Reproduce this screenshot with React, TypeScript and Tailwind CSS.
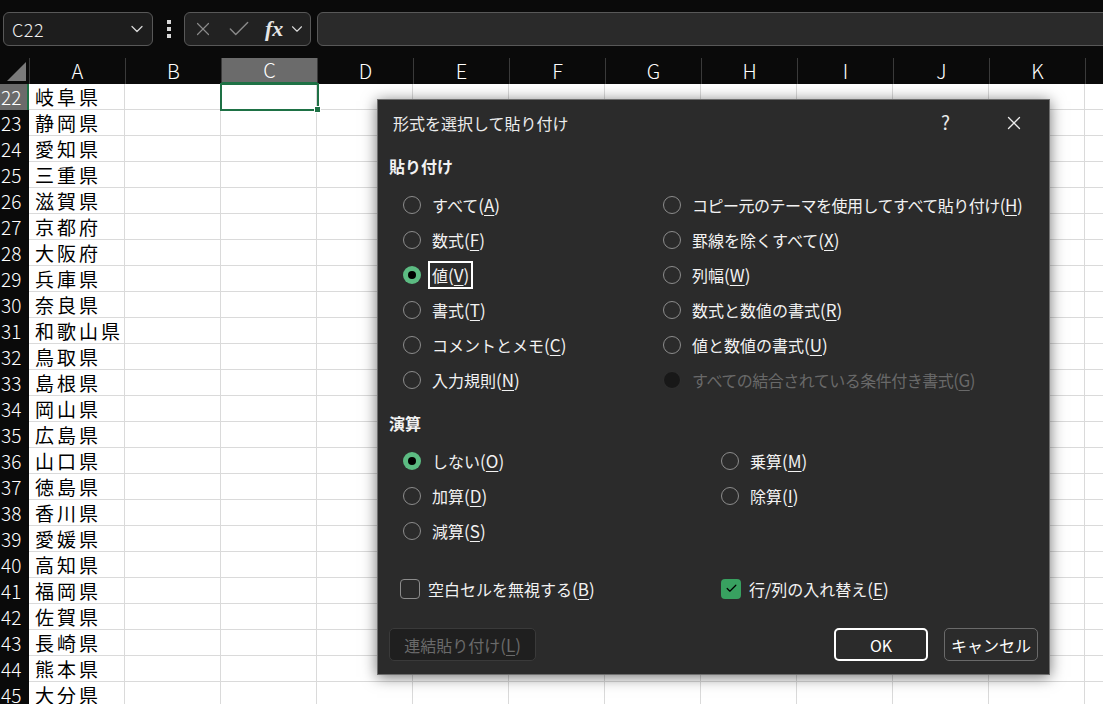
import { Check, ChevronDown, X } from 'lucide-react';

const prefectures = [
  '岐阜県', '静岡県', '愛知県', '三重県', '滋賀県', '京都府', '大阪府', '兵庫県',
  '奈良県', '和歌山県', '鳥取県', '島根県', '岡山県', '広島県', '山口県', '徳島県',
  '香川県', '愛媛県', '高知県', '福岡県', '佐賀県', '長崎県', '熊本県', '大分県',
];

const columns = ['A', 'B', 'C', 'D', 'E', 'F', 'G', 'H', 'I', 'J', 'K', ''];

type Item = { label: string; k: string; selected?: boolean; disabled?: boolean; focused?: boolean; tight?: boolean };

const pasteLeft: Item[] = [
  { label: 'すべて', k: 'A' },
  { label: '数式', k: 'F' },
  { label: '値', k: 'V', selected: true, focused: true },
  { label: '書式', k: 'T' },
  { label: 'コメントとメモ', k: 'C' },
  { label: '入力規則', k: 'N' },
];

const pasteRight: Item[] = [
  { label: 'コピー元のテーマを使用してすべて貼り付け', k: 'H', tight: true },
  { label: '罫線を除くすべて', k: 'X' },
  { label: '列幅', k: 'W' },
  { label: '数式と数値の書式', k: 'R' },
  { label: '値と数値の書式', k: 'U' },
  { label: 'すべての結合されている条件付き書式', k: 'G', disabled: true, tight: true },
];

const opLeft: Item[] = [
  { label: 'しない', k: 'O', selected: true },
  { label: '加算', k: 'D' },
  { label: '減算', k: 'S' },
];

const opRight: Item[] = [
  { label: '乗算', k: 'M' },
  { label: '除算', k: 'I' },
];

function Mnemonic({ label, k }: { label: string; k: string }) {
  return (
    <>
      {label}
      <span className="text-[17px]">
        (<span className="underline decoration-1 underline-offset-[3px]">{k}</span>)
      </span>
    </>
  );
}

function Radio({ item }: { item: Item }) {
  let circle = <div className="w-[18px] h-[18px] shrink-0 rounded-full border-[1.5px] border-[#8c8c8c]" />;
  if (item.selected) {
    circle = (
      <div className="w-[18px] h-[18px] shrink-0 rounded-full bg-[#5cbb82] flex items-center justify-center">
        <div className="w-[8px] h-[8px] rounded-full bg-black" />
      </div>
    );
  } else if (item.disabled) {
    circle = <div className="w-[18px] h-[18px] shrink-0 rounded-full border-[1.5px] border-[#2f2f2f] bg-[#181818]" />;
  }

  return (
    <div className="h-[35px] flex items-center gap-[11px]">
      {circle}
      <span
        className={`whitespace-nowrap text-[16px] ${item.tight ? 'tracking-[-0.5px]' : ''} ${
          item.disabled ? 'text-[#696969]' : 'text-[#f2f2f2]'
        } ${item.focused ? 'leading-[20px] outline-2 outline-offset-2 outline-white' : ''}`}
      >
        <Mnemonic label={item.label} k={item.k} />
      </span>
    </div>
  );
}

function Toolbar() {
  return (
    <div className="h-[58px] flex items-center bg-[#0a0a0a] overflow-hidden">
      <div className="ml-[3px] w-[150px] h-[34px] shrink-0 rounded-[6px] border border-[#585858] bg-[#1d1d1d] flex items-center justify-between pl-[8px] pr-[5px]">
        <span className="text-[18px] font-light tracking-[0.5px] text-[#f0f0f0]">C22</span>
        <ChevronDown className="w-[20px] h-[20px] text-[#d8d8d8]" strokeWidth={1.5} />
      </div>
      <div className="w-[31px] shrink-0 flex flex-col items-center gap-[3px]">
        <div className="w-[4px] h-[4px] bg-[#d8d8d8]" />
        <div className="w-[4px] h-[4px] bg-[#d8d8d8]" />
        <div className="w-[4px] h-[4px] bg-[#d8d8d8]" />
      </div>
      <div className="w-[127px] h-[34px] shrink-0 rounded-[6px] border border-[#585858] bg-[#222222] flex items-center pl-[7px]">
        <X className="w-[22px] h-[22px] text-[#8a8a8a]" strokeWidth={1.3} />
        <Check className="w-[26px] h-[26px] ml-[12px] text-[#8a8a8a]" strokeWidth={1.3} />
        <span className="ml-[13px] text-[22px] italic font-semibold text-[#e6e6e6] font-['Liberation_Serif',serif] leading-none">
          fx
        </span>
        <ChevronDown className="w-[18px] h-[18px] ml-[5px] text-[#d8d8d8]" strokeWidth={1.5} />
      </div>
      <div className="ml-[6px] w-[820px] h-[34px] shrink-0 rounded-[6px] border border-[#585858] bg-[#2a2a2a]" />
    </div>
  );
}

function Sheet() {
  return (
    <div className="relative">
      <div className="h-[26px] flex bg-[#0a0a0a]">
        <div className="w-[29px] shrink-0 flex items-end justify-end pr-[3px] pb-[3px]">
          <svg width="19" height="19" viewBox="0 0 19 19">
            <polygon points="0,19 19,19 19,0" fill="#7a7a7a" />
          </svg>
        </div>
        {columns.map((c, i) => (
          <div
            key={i}
            className={`w-[96px] shrink-0 border-l border-[#3a3a3a] flex items-center justify-center text-[20px] font-light text-white ${
              c === 'C' ? 'bg-[#6b6b6b] border-b-2 border-b-[#1e7145]' : ''
            }`}
          >
            {c}
          </div>
        ))}
      </div>
      {prefectures.map((p, r) => {
        const num = 22 + r;
        const sel = num === 22;
        return (
          <div key={num} className="h-[26px] flex">
            <div
              className={`w-[29px] h-[26px] shrink-0 overflow-hidden flex items-center ${
                sel ? 'bg-[#6b6b6b] border-r-2 border-[#1e7145]' : 'bg-[#0a0a0a]'
              }`}
            >
              <span className="pl-[1px] text-[19px] leading-[20px] font-light text-white">{num}</span>
            </div>
            {columns.map((c, i) => (
              <div
                key={i}
                className="w-[96px] h-[26px] shrink-0 bg-white border-r border-b border-[#dadada] pl-[6px] text-[19px] leading-[25px] tracking-[3px] text-black whitespace-nowrap"
              >
                {c === 'A' ? p : ''}
              </div>
            ))}
          </div>
        );
      })}
      <div className="absolute left-[220px] top-[25px] w-[99px] h-[28px] border-2 border-[#1e7145]" />
      <div className="absolute left-[314px] top-[48px] w-[7px] h-[7px] bg-[#1e7145] border border-white" />
    </div>
  );
}

function PasteDialog() {
  return (
    <div className="absolute left-[377px] top-[99px] w-[673px] h-[576px] bg-[#2b2b2b] border border-[#6e6e6e] shadow-[0_2px_14px_rgba(0,0,0,0.55)] text-[#f2f2f2]">
      <div className="h-[45px] flex items-center pl-[15px]">
        <span className="text-[16px] text-[#ececec]">形式を選択して貼り付け</span>
        <span className="ml-auto text-[19px] text-[#ececec]">?</span>
        <X className="ml-[53px] mr-[24px] w-[22px] h-[22px] text-[#ececec]" strokeWidth={1.4} />
      </div>

      <div className="h-[42px] flex items-center pl-[11px] text-[16px] font-bold">貼り付け</div>
      <div className="flex pl-[25px]">
        <div className="w-[260px] shrink-0">
          {pasteLeft.map((it) => (
            <Radio key={it.k} item={it} />
          ))}
        </div>
        <div>
          {pasteRight.map((it) => (
            <Radio key={it.k} item={it} />
          ))}
        </div>
      </div>

      <div className="h-[46px] pt-[5px] flex items-center pl-[11px] text-[16px] font-bold">演算</div>
      <div className="flex pl-[25px] h-[105px]">
        <div className="w-[318px] shrink-0">
          {opLeft.map((it) => (
            <Radio key={it.k} item={it} />
          ))}
        </div>
        <div>
          {opRight.map((it) => (
            <Radio key={it.k} item={it} />
          ))}
        </div>
      </div>

      <div className="mt-[23px] h-[35px] flex items-center pl-[22px]">
        <div className="w-[321px] shrink-0 flex items-center gap-[8px]">
          <div className="w-[20px] h-[20px] rounded-[4px] border-[1.5px] border-[#8c8c8c]" />
          <span className="text-[16px]">
            <Mnemonic label="空白セルを無視する" k="B" />
          </span>
        </div>
        <div className="flex items-center gap-[8px]">
          <div className="w-[20px] h-[20px] rounded-[4px] bg-[#38a160] flex items-center justify-center">
            <Check className="w-[13px] h-[13px] text-black" strokeWidth={2.2} />
          </div>
          <span className="text-[16px]">
            <Mnemonic label="行/列の入れ替え" k="E" />
          </span>
        </div>
      </div>

      <div className="mt-[22px] h-[33px] flex px-[11px]">
        <div className="w-[147px] h-[33px] rounded-[5px] border border-[#3a3a3a] bg-[#1f1f1f] flex items-center justify-center text-[16px] text-[#6a6a6a]">
          <Mnemonic label="連結貼り付け" k="L" />
        </div>
        <div className="ml-auto w-[94px] h-[33px] rounded-[5px] border-2 border-white flex items-center justify-center text-[16px] text-white">
          OK
        </div>
        <div className="ml-[16px] w-[94px] h-[33px] rounded-[5px] border border-[#6a6a6a] flex items-center justify-center text-[16px] text-white">
          キャンセル
        </div>
      </div>
    </div>
  );
}

export default function App() {
  return (
    <div className="relative w-[1103px] h-[704px] overflow-hidden bg-white font-['Noto_Sans_CJK_JP',sans-serif]">
      <Toolbar />
      <Sheet />
      <PasteDialog />
    </div>
  );
}
